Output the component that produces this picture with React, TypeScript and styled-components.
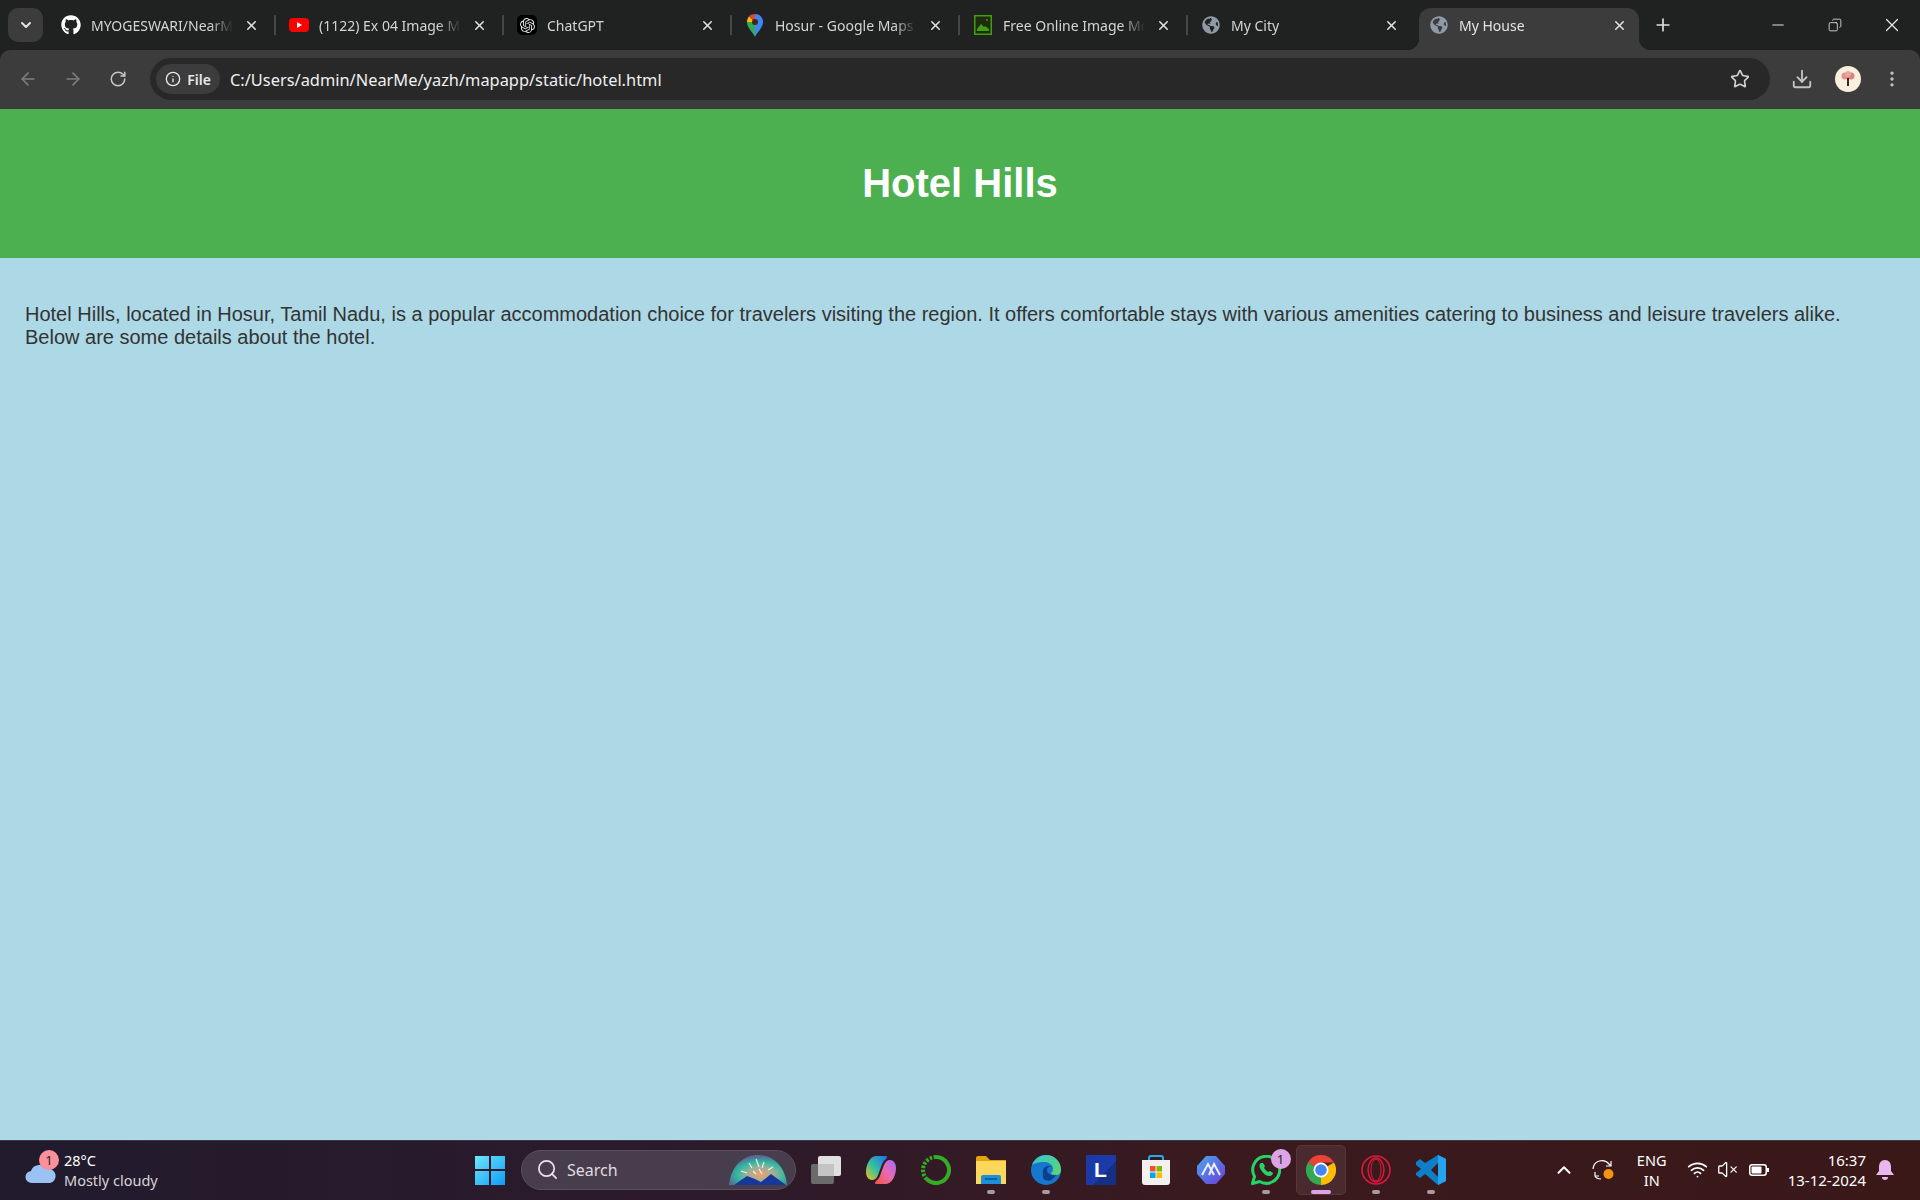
import { FC, ReactNode } from 'react'
import styled, { createGlobalStyle } from 'styled-components'
import {
	ArrowLeft,
	ArrowRight,
	ChevronDown,
	ChevronUp,
	Copy,
	Download,
	EllipsisVertical,
	Info,
	Minus,
	Plus,
	RotateCw,
	Search,
	Star,
	VolumeX,
	Wifi,
	X,
} from 'lucide-react'
import { FaGithub, FaGlobeAmericas } from 'react-icons/fa'
import { SiOpenai } from 'react-icons/si'

const GlobalStyle = createGlobalStyle`
	html, body {
		margin: 0;
		padding: 0;
		width: 1920px;
		height: 1200px;
		overflow: hidden;
	}
	* {
		box-sizing: border-box;
	}
`

const YoutubeIcon = () => (
	<svg width='20' height='20' viewBox='0 0 20 20'>
		<rect x='0' y='3' width='20' height='14' rx='4' fill='#f00' />
		<path d='M8 7l5 3-5 3z' fill='#fff' />
	</svg>
)

const GptIcon = () => (
	<GptBox>
		<SiOpenai size={15} color='#e8e8e8' />
	</GptBox>
)

const MapsIcon = () => (
	<svg width='20' height='24' viewBox='0 0 20 24'>
		<path d='M10 24C8 19 2 15 2 9h8z' fill='#34a853' />
		<path d='M10 24c2-5 8-9 8-15h-8z' fill='#4285f4' />
		<path d='M4 3.5L10 9H2c0-2 .7-4 2-5.500z' fill='#fbbc04' />
		<path d='M4 3.500C5.500 1.700 7.700 1 10 1v8z' fill='#ea4335' />
		<path d='M10 1c4.500 0 8 3.500 8 8h-8z' fill='#4285f4' />
		<circle cx='10' cy='9' r='3' fill='#3b2a1a' />
	</svg>
)

const ImageIcon = () => (
	<svg width='18' height='20' viewBox='0 0 18 20'>
		<rect x='0.750' y='0.750' width='16.500' height='18.500' fill='#1f2a10' stroke='#3fa10a' strokeWidth='1.500' />
		<path d='M3 14l4-5 3 3 1-1 4 3v2H3z' fill='#3fa10a' />
		<circle cx='13' cy='5' r='1' fill='#3fa10a' />
	</svg>
)

const GlobeIcon = () => <FaGlobeAmericas size={18} color='#8f9aa8' />

type TabData = { title: string; icon: ReactNode; active?: boolean; noDivider?: boolean }

const tabs: TabData[] = [
	{ title: 'MYOGESWARI/NearMe', icon: <FaGithub size={20} color='#fff' /> },
	{ title: '(1122) Ex 04 Image Mosaic', icon: <YoutubeIcon /> },
	{ title: 'ChatGPT', icon: <GptIcon /> },
	{ title: 'Hosur - Google Maps', icon: <MapsIcon /> },
	{ title: 'Free Online Image Mosaic', icon: <ImageIcon /> },
	{ title: 'My City', icon: <GlobeIcon />, noDivider: true },
	{ title: 'My House', icon: <GlobeIcon />, active: true, noDivider: true },
]

const TaskViewIcon = () => (
	<svg width='30' height='28' viewBox='0 0 30 28'>
		<rect x='0' y='8' width='23' height='20' rx='2' fill='#6b6b6b' />
		<rect x='7' y='0' width='23' height='20' rx='2' fill='#f1f1f1' fillOpacity='0.92' />
		<rect x='7' y='8' width='16' height='12' fill='#c4c4c4' />
	</svg>
)

const CopilotIcon = () => (
	<svg width='30' height='28' viewBox='0 0 30 28'>
		<defs>
			<linearGradient id='copilotA' x1='0' y1='1' x2='1' y2='0'>
				<stop offset='0' stopColor='#f5c518' />
				<stop offset='0.450' stopColor='#35c0a0' />
				<stop offset='1' stopColor='#1f6ff0' />
			</linearGradient>
			<linearGradient id='copilotB' x1='0' y1='1' x2='1' y2='0'>
				<stop offset='0' stopColor='#f2553c' />
				<stop offset='0.500' stopColor='#ec68b0' />
				<stop offset='1' stopColor='#a06cf4' />
			</linearGradient>
		</defs>
		<path d='M10 0h9c3 0 2 2 1 3-3 2-4 5-5 8l-3 8c-1 3-3 5-6 5-4 0-6-4-6-8C0 9 4 0 10 0z' fill='url(#copilotA)' />
		<path d='M20 28h-9c-3 0-2-2-1-3 3-2 4-5 5-8l3-8c1-3 3-5 6-5 4 0 6 4 6 8 0 7-4 16-10 16z' fill='url(#copilotB)' />
	</svg>
)

const RingIcon = () => (
	<svg width='30' height='30' viewBox='0 0 30 30'>
		<path d='M15 2a13 13 0 1 1-9.200 22.200' fill='none' stroke='#35ac26' strokeWidth='4' />
		<path d='M5.800 24.200A13 13 0 0 1 15 2' fill='none' stroke='#35ac26' strokeWidth='4' strokeDasharray='2.500 1.500' />
	</svg>
)

const FolderIcon = () => (
	<svg width='30' height='28' viewBox='0 0 30 28'>
		<path d='M0 2a2 2 0 0 1 2-2h8l4 4h16v8H0z' fill='#e0a40d' />
		<rect x='0' y='5' width='30' height='23' fill='#fbd75b' />
		<path d='M5 28v-7a2 2 0 0 1 2-2h16a2 2 0 0 1 2 2v7z' fill='#1b8fdc' />
		<rect x='9' y='22' width='12' height='2' fill='#0a5fa8' />
	</svg>
)

const EdgeIcon = () => (
	<svg width='30' height='30' viewBox='0 0 30 30'>
		<defs>
			<linearGradient id='edgeA' x1='0' y1='0' x2='1' y2='1'>
				<stop offset='0' stopColor='#37c6d0' />
				<stop offset='1' stopColor='#5ed66a' />
			</linearGradient>
		</defs>
		<circle cx='15' cy='15' r='15' fill='#1677cf' />
		<path d='M1 10C3 4 9 0 15 0c8 0 15 6 15 15 0 3-2 5-5 5-3 0-5-1-5-2 1-1 2-2 2-4 0-4-4-7-8-7-6 0-11 1-13 3z' fill='url(#edgeA)' />
		<path d='M12 16c0-3 3-5 6-5 2 0 3 1 3 1-3-1-5 0-5 3 0 4 5 6 9 5-3 5-7 7-11 5-3-2-2-6-2-9z' fill='#0c3f8a' />
	</svg>
)

const LetterIcon = styled.div`
	width: 30px;
	height: 30px;
	background: linear-gradient(135deg, #1b3aa8 60%, #162f86 60%);
	color: #fff;
	font: 700 21px 'Liberation Sans', sans-serif;
	display: flex;
	align-items: center;
	justify-content: center;
`

const StoreIcon = () => (
	<svg width='30' height='30' viewBox='0 0 30 30'>
		<path d='M8 7V3a2 2 0 0 1 2-2h10a2 2 0 0 1 2 2v4' fill='none' stroke='#22aee8' strokeWidth='2' />
		<path d='M1 5h28v22a3 3 0 0 1-3 3H4a3 3 0 0 1-3-3z' fill='#f3f1ee' />
		<rect x='9' y='11' width='5.500' height='5.500' fill='#f0512b' />
		<rect x='15.500' y='11' width='5.500' height='5.500' fill='#7fba00' />
		<rect x='9' y='17.500' width='5.500' height='5.500' fill='#00a4ef' />
		<rect x='15.500' y='17.500' width='5.500' height='5.500' fill='#ffb900' />
	</svg>
)

const HexIcon = () => (
	<svg width='28' height='30' viewBox='0 0 28 30'>
		<defs>
			<linearGradient id='hexA' x1='0' y1='0' x2='1' y2='1'>
				<stop offset='0' stopColor='#4ba6ee' />
				<stop offset='1' stopColor='#6a3ed8' />
			</linearGradient>
		</defs>
		<path d='M9 1h10l9 10v8l-9 10H9L0 19v-8z' fill='url(#hexA)' />
		<path d='M5 20l6-11 6 11M12 20l5-11 6 11' fill='none' stroke='#eef' strokeWidth='2' />
	</svg>
)

const WhatsappIcon = () => (
	<svg width='30' height='30' viewBox='0 0 30 30'>
		<path d='M1.500 28.500l2-7A13.500 13.500 0 1 1 8.500 26.500z' fill='none' stroke='#25d366' strokeWidth='3' strokeLinejoin='round' />
		<path d='M10 8c-2 1-2 4 0 7s5 6 8 6 4-2 4-3l-3-2-2 1c-2-1-3-3-4-4l1-2-2-3z' fill='#25d366' />
	</svg>
)

const ChromeIcon = () => (
	<svg width='30' height='30' viewBox='0 0 30 30'>
		<path d='M15 15L2 7.500A15 15 0 0 1 28 7.500H15z' fill='#ea4335' />
		<path d='M15 15l13-7.500A15 15 0 0 1 15 30z' fill='#fbbc04' />
		<path d='M15 15v15A15 15 0 0 1 2 7.500z' fill='#34a853' />
		<circle cx='15' cy='15' r='7.500' fill='#fff' />
		<circle cx='15' cy='15' r='5.800' fill='#4285f4' />
	</svg>
)

const OperaIcon = () => (
	<svg width='30' height='30' viewBox='0 0 30 30' fill='none' stroke='#e0163f'>
		<circle cx='15' cy='15' r='14' strokeWidth='1.600' />
		<ellipse cx='15' cy='15' rx='8' ry='12' strokeWidth='1.400' />
		<ellipse cx='15' cy='15' rx='5' ry='11' strokeWidth='1' />
	</svg>
)

const VscodeIcon = () => (
	<svg width='30' height='30' viewBox='0 0 30 30'>
		<path d='M22 0l8 4v22l-8 4-13-11-5 4-4-3v-2l5-4-5-4V7l4-3 5 4z' fill='#0d7fc9' />
		<path d='M22 8l-7 7 7 7z' fill='#3a1a1e' />
		<path d='M22 0l8 4v22l-8 4z' fill='#24a4ec' />
	</svg>
)

const SyncIcon = () => (
	<svg width='24' height='24' viewBox='0 0 24 24'>
		<path d='M2 11a9 9 0 0 1 16-5l2 2M20 3v5h-5M10 21c-3 0-5-1-6-3M4 14v4h4' fill='none' stroke='#fff' strokeWidth='1.200' />
		<circle cx='17.500' cy='16' r='5' fill='#f7930e' />
	</svg>
)

type DockItem = { icon: ReactNode; open?: boolean; active?: boolean; badge?: string }

const dock: DockItem[] = [
	{ icon: <TaskViewIcon /> },
	{ icon: <CopilotIcon /> },
	{ icon: <RingIcon /> },
	{ icon: <FolderIcon />, open: true },
	{ icon: <EdgeIcon />, open: true },
	{ icon: <LetterIcon>L</LetterIcon> },
	{ icon: <StoreIcon /> },
	{ icon: <HexIcon /> },
	{ icon: <WhatsappIcon />, open: true, badge: '1' },
	{ icon: <ChromeIcon />, open: true, active: true },
	{ icon: <OperaIcon />, open: true },
	{ icon: <VscodeIcon />, open: true },
]

const App: FC = () => (
	<Screen>
		<GlobalStyle />
		<TabBar>
			<TabSearch>
				<ChevronDown size={16} strokeWidth={3} />
			</TabSearch>
			<TabList>
				{tabs.map((tab) => (
					<Tab key={tab.title} $active={tab.active} $noDivider={tab.noDivider}>
						<TabIcon>{tab.icon}</TabIcon>
						<TabTitle>{tab.title}</TabTitle>
						<TabClose>
							<X size={15} strokeWidth={2.5} />
						</TabClose>
					</Tab>
				))}
				<NewTab>
					<Plus size={20} strokeWidth={2} />
				</NewTab>
			</TabList>
			<WindowControls>
				<WindowButton>
					<Minus size={18} strokeWidth={1.3} />
				</WindowButton>
				<WindowButton>
					<Copy size={14} strokeWidth={1.4} style={{ transform: 'scaleX(-1)' }} />
				</WindowButton>
				<WindowButton>
					<X size={22} strokeWidth={1.3} />
				</WindowButton>
			</WindowControls>
		</TabBar>

		<Toolbar>
			<NavButton $dim>
				<ArrowLeft size={20} />
			</NavButton>
			<NavButton $dim>
				<ArrowRight size={20} />
			</NavButton>
			<NavButton>
				<RotateCw size={18} />
			</NavButton>
			<Omnibox>
				<FileChip>
					<Info size={16} />
					File
				</FileChip>
				<Url>C:/Users/admin/NearMe/yazh/mapapp/static/hotel.html</Url>
				<Star size={20} color='#d0d0d0' />
			</Omnibox>
			<ToolbarEnd>
				<Download size={22} color='#c4c4c4' />
				<Avatar>
					<svg width='16' height='18' viewBox='0 0 16 18'>
						<circle cx='5' cy='6' r='3.500' fill='#e3908e' />
						<circle cx='11' cy='6' r='3.500' fill='#d9837f' />
						<circle cx='8' cy='4' r='3' fill='#eaa5a0' />
						<path d='M7 8h2v8H7z' fill='#3a2a22' />
					</svg>
				</Avatar>
				<EllipsisVertical size={20} color='#c4c4c4' />
			</ToolbarEnd>
		</Toolbar>

		<Page>
			<PageHeader>
				<PageTitle>Hotel Hills</PageTitle>
			</PageHeader>
			<Intro>
				Hotel Hills, located in Hosur, Tamil Nadu, is a popular accommodation choice for travelers visiting the
				region. It offers comfortable stays with various amenities catering to business and leisure travelers
				alike. Below are some details about the hotel.
			</Intro>
		</Page>

		<Taskbar>
			<Weather>
				<WeatherIcon>
					<svg width='32' height='24' viewBox='0 0 32 24'>
						<rect x='19' y='0' width='7' height='8' fill='#f08a1c' />
						<path d='M7 23a6 6 0 0 1-1-12 9 9 0 0 1 16-2 7 7 0 0 1 3 14z' fill='#9cc2f5' />
					</svg>
					<CountBadge $color='#fb8f9c' $top={-10} $left={14}>
						1
					</CountBadge>
				</WeatherIcon>
				<TwoLine>
					<span>28°C</span>
					<WeatherText>Mostly cloudy</WeatherText>
				</TwoLine>
			</Weather>

			<Dock>
				<StartButton>
					<svg width='30' height='30' viewBox='0 0 30 30'>
						<defs>
							<linearGradient id='startA' x1='0' y1='0' x2='1' y2='1'>
								<stop offset='0' stopColor='#6fe6fb' />
								<stop offset='1' stopColor='#0f9bf5' />
							</linearGradient>
						</defs>
						<path d='M0 1h14v13H0zM16 1h14v13H16zM0 16h14v14H0zM16 16h14v14H16z' fill='url(#startA)' />
					</svg>
				</StartButton>
				<SearchBox>
					<Search size={23} strokeWidth={1.8} color='#e8e4e8' />
					<SearchLabel>Search</SearchLabel>
					<svg width='58' height='30' viewBox='0 0 58 30'>
						<defs>
							<radialGradient id='dome' cx='0.550' cy='0.650' r='0.600'>
								<stop offset='0' stopColor='#f0a070' />
								<stop offset='0.400' stopColor='#9ab098' />
								<stop offset='0.700' stopColor='#2fb8a0' />
								<stop offset='1' stopColor='#5a6a98' />
							</radialGradient>
						</defs>
						<path d='M0 30C2 10 15 0 29 0s27 10 29 30z' fill='url(#dome)' />
						<path d='M5 30l13-9 8 3 6 3 10-8 15 11z' fill='#17389a' />
						<path d='M12 16l6 2M20 8l3 5M27 4l3 8M35 7l-2 6M44 12l-5 3M30 14l3 5M24 16l3 3' stroke='#fff' strokeWidth='1.200' strokeOpacity='0.850' />
					</svg>
				</SearchBox>
				{dock.map((item, i) => (
					<DockSlot key={i}>
						<DockButton $active={item.active}>
							{item.icon}
							{item.badge && (
								<CountBadge $color='#dda3e6' $top={3} $left={29}>
									{item.badge}
								</CountBadge>
							)}
						</DockButton>
						<DockPip $open={item.open} $active={item.active} />
					</DockSlot>
				))}
			</Dock>

			<Tray>
				<TrayIcon $width={26}>
					<ChevronUp size={22} strokeWidth={2.2} color='#fff' />
				</TrayIcon>
				<TrayIcon $width={52}>
					<SyncIcon />
				</TrayIcon>
				<Lang>
					<span>ENG</span>
					<span>IN</span>
				</Lang>
				<TrayIcon $width={30}>
					<Wifi size={21} color='#fff' />
				</TrayIcon>
				<TrayIcon $width={30}>
					<VolumeX size={21} strokeWidth={1.5} color='#fff' />
				</TrayIcon>
				<TrayIcon $width={32}>
					<svg width='20' height='12' viewBox='0 0 20 12'>
						<rect x='0.750' y='0.750' width='16.500' height='10.500' rx='2.500' fill='none' stroke='#fff' strokeWidth='1.500' />
						<rect x='2.500' y='2.500' width='10' height='7' rx='1' fill='#fff' />
						<rect x='18' y='4' width='2' height='4' fill='#fff' />
					</svg>
				</TrayIcon>
				<Clock>
					<span>16:37</span>
					<span>13-12-2024</span>
				</Clock>
				<Bell>
					<svg width='18' height='20' viewBox='0 0 18 20'>
						<path d='M9 0c4 0 6 3 6 7v4l3 4H0l3-4V7c0-4 2-7 6-7z' fill='#eab6ef' />
						<path d='M6 17h6a3 3 0 0 1-6 0z' fill='#eab6ef' />
					</svg>
				</Bell>
			</Tray>
		</Taskbar>
	</Screen>
)

const Screen = styled.div`
	width: 1920px;
	height: 1200px;
	display: flex;
	flex-direction: column;
	overflow: hidden;
	background: #202222;
	font-family: 'Noto Sans', 'Open Sans', sans-serif;
`

const TabBar = styled.div`
	height: 50px;
	flex: none;
	display: flex;
	padding-left: 8px;
`

const TabSearch = styled.div`
	width: 35px;
	height: 34px;
	margin-top: 8px;
	border-radius: 10px;
	background: #3c3c3c;
	color: #e4e4e4;
	display: flex;
	align-items: center;
	justify-content: center;
`

const TabList = styled.div`
	display: flex;
	margin-left: 5px;
`

const Tab = styled.div<{ $active?: boolean; $noDivider?: boolean }>`
	position: relative;
	width: 228px;
	height: 42px;
	margin-top: 8px;
	padding-left: 13px;
	padding-bottom: 8px;
	display: flex;
	align-items: center;
	color: ${({ $active }) => ($active ? '#e4e4e4' : '#d4d4d4')};
	background: ${({ $active }) => ($active ? '#3c3c3c' : 'transparent')};
	border-radius: 12px 12px 0 0;
	${({ $active }) => ($active ? 'width: 220px; margin-left: 3px; margin-right: 4px; padding-left: 10px;' : '')}

	&::after {
		content: '';
		display: ${({ $noDivider }) => ($noDivider ? 'none' : 'block')};
		position: absolute;
		right: 0;
		top: 7px;
		width: 2px;
		height: 20px;
		background: #464848;
	}

	${({ $active }) =>
		$active
			? `
	&::before,
	&::after {
		content: '';
		display: block;
		position: absolute;
		top: auto;
		bottom: 0;
		width: 12px;
		height: 12px;
	}
	&::before {
		left: -12px;
		background: radial-gradient(circle at 0 0, transparent 12px, #3c3c3c 12.5px);
	}
	&::after {
		right: -12px;
		background: radial-gradient(circle at 100% 0, transparent 12px, #3c3c3c 12.5px);
	}`
			: ''}
`

const TabIcon = styled.div`
	width: 20px;
	height: 24px;
	flex: none;
	display: flex;
	align-items: center;
	justify-content: center;
`

const GptBox = styled.div`
	width: 20px;
	height: 20px;
	border-radius: 5px;
	background: #000;
	display: flex;
	align-items: center;
	justify-content: center;
`

const TabTitle = styled.div`
	width: 145px;
	margin-left: 10px;
	overflow: hidden;
	white-space: nowrap;
	font-size: 14px;
	mask-image: linear-gradient(to right, #000 82%, transparent 98%);
`

const TabClose = styled.div`
	width: 20px;
	margin-left: 5px;
	display: flex;
	justify-content: center;
	color: #e0e0e0;
`

const NewTab = styled.div`
	width: 40px;
	height: 50px;
	color: #e0e0e0;
	display: flex;
	align-items: center;
	justify-content: center;
`

const WindowControls = styled.div`
	margin-left: auto;
	display: flex;
`

const WindowButton = styled.div`
	width: 57px;
	height: 50px;
	color: #e8e8e8;
	display: flex;
	align-items: center;
	justify-content: center;
`

const Toolbar = styled.div`
	height: 59px;
	flex: none;
	display: flex;
	align-items: center;
	padding: 0 0 1px 5px;
	background: #3c3c3c;
	border-radius: 10px 10px 0 0;
`

const NavButton = styled.div<{ $dim?: boolean }>`
	width: 45px;
	flex: none;
	display: flex;
	justify-content: center;
	color: ${({ $dim }) => ($dim ? '#7d7d7d' : '#c8c8c8')};
`

const Omnibox = styled.div`
	width: 1620px;
	height: 42px;
	flex: none;
	margin-left: 10px;
	padding: 0 20px 0 6px;
	border-radius: 21px;
	background: #282828;
	display: flex;
	align-items: center;
`

const FileChip = styled.div`
	width: 64px;
	height: 30px;
	flex: none;
	border-radius: 15px;
	background: #3c3c3c;
	color: #e8e8e8;
	font-size: 14px;
	font-weight: 600;
	display: flex;
	align-items: center;
	justify-content: center;
	gap: 6px;
`

const Url = styled.div`
	flex: 1;
	margin-left: 10px;
	color: #f0f0f0;
	font-size: 16.400px;
`

const ToolbarEnd = styled.div`
	flex: 1;
	padding: 0 18px 0 21px;
	display: flex;
	align-items: center;
	justify-content: space-between;
`

const Avatar = styled.div`
	width: 26px;
	height: 26px;
	border-radius: 50%;
	background: #f8efdf;
	display: flex;
	align-items: center;
	justify-content: center;
`

const Page = styled.main`
	flex: 1;
	background: #add8e6;
	font-family: 'Liberation Sans', Arial, sans-serif;
`

const PageHeader = styled.header`
	height: 149px;
	background: #4caf50;
	display: flex;
	align-items: center;
	justify-content: center;
`

const PageTitle = styled.h1`
	margin: 0;
	color: #fff;
	font-size: 40px;
	font-weight: 700;
`

const Intro = styled.p`
	margin: 45px 25px 0;
	color: #333;
	font-size: 20px;
	line-height: 23px;
`

const Taskbar = styled.footer`
	height: 60px;
	flex: none;
	padding-bottom: 2px;
	display: flex;
	align-items: center;
	border-top: 1px solid #3e3a42;
	background: linear-gradient(to right, #211b2d 0%, #2c1a2c 35%, #3a1a1e 65%, #3a1818 100%);
	color: #fff;
`

const Weather = styled.div`
	width: 475px;
	flex: none;
	padding-left: 25px;
	display: flex;
	align-items: center;
	gap: 8px;
`

const WeatherIcon = styled.div`
	position: relative;
	width: 31px;
	height: 24px;
	margin-top: 5px;
`

const TwoLine = styled.div`
	display: flex;
	flex-direction: column;
	font-size: 14.500px;
	line-height: 20px;
`

const WeatherText = styled.span`
	color: #d8d4d8;
`

const CountBadge = styled.span<{ $color: string; $top: number; $left: number }>`
	position: absolute;
	top: ${({ $top }) => $top}px;
	left: ${({ $left }) => $left}px;
	width: 20px;
	height: 20px;
	border-radius: 50%;
	background: ${({ $color }) => $color};
	color: #222;
	font-size: 13px;
	line-height: 20px;
	text-align: center;
`

const Dock = styled.div`
	display: flex;
	align-items: center;
`

const StartButton = styled.div`
	width: 30px;
	height: 30px;
	display: flex;
`

const SearchBox = styled.div`
	width: 275px;
	height: 40px;
	margin: 0 2px 0 16px;
	padding: 0 8px 0 14px;
	border-radius: 20px;
	background: #483d4c;
	border: 1px solid #5a505e;
	display: flex;
	align-items: center;
`

const SearchLabel = styled.span`
	flex: 1;
	margin-left: 8px;
	color: #e0dce0;
	font-size: 16px;
`

const DockSlot = styled.div`
	position: relative;
	width: 55px;
	height: 57px;
	display: flex;
	align-items: center;
	justify-content: center;
`

const DockButton = styled.div<{ $active?: boolean }>`
	position: relative;
	width: 50px;
	height: 50px;
	border-radius: 5px;
	background: ${({ $active }) => ($active ? '#4a2a2e' : 'transparent')};
	border: 1px solid ${({ $active }) => ($active ? '#55383a' : 'transparent')};
	display: flex;
	align-items: center;
	justify-content: center;
`

const DockPip = styled.span<{ $open?: boolean; $active?: boolean }>`
	display: ${({ $open }) => ($open ? 'block' : 'none')};
	position: absolute;
	bottom: 4px;
	left: 50%;
	transform: translateX(-50%);
	width: ${({ $active }) => ($active ? 20 : 8)}px;
	height: 4px;
	border-radius: 2px;
	background: ${({ $active }) => ($active ? '#dda3e6' : '#a99a9c')};
`

const Tray = styled.div`
	margin-left: auto;
	padding-right: 26px;
	display: flex;
	align-items: center;
`

const TrayIcon = styled.div<{ $width: number }>`
	width: ${({ $width }) => $width}px;
	display: flex;
	align-items: center;
	justify-content: center;
`

const Lang = styled.div`
	width: 46px;
	margin-right: 8px;
	display: flex;
	flex-direction: column;
	align-items: center;
	font-size: 14.500px;
	line-height: 20px;
`

const Clock = styled.div`
	margin-left: 13px;
	display: flex;
	flex-direction: column;
	align-items: flex-end;
	font-size: 15px;
	line-height: 20px;
`

const Bell = styled.div`
	margin-left: 10px;
	display: flex;
`

export default App
